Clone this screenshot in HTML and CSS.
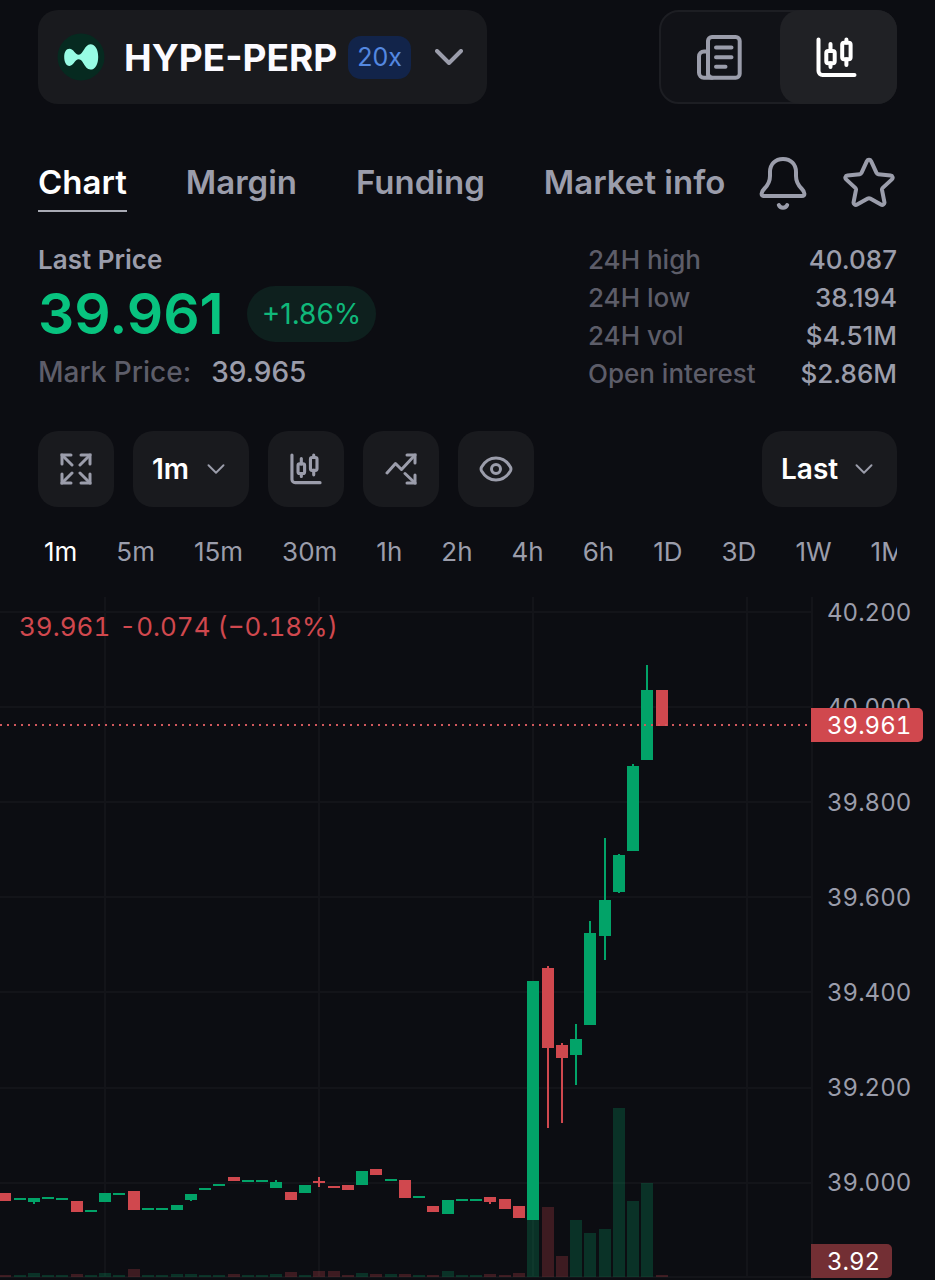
FILE: index.html
```html
<!DOCTYPE html>
<html lang="en">
<head>
  <meta charset="UTF-8">
  <meta name="viewport" content="width=device-width, initial-scale=1.0">
  <title>HYPE-PERP</title>
  <link rel="stylesheet" href="styles.css">
</head>
<body>

  <svg class="sprite" aria-hidden="true">
    <symbol id="candles" viewBox="0 0 41 41">
      <path d="M2.5 2.5V34a4 4 0 0 0 4 4h32"/>
      <rect x="10.3" y="14" width="8.4" height="12.3" rx="2"/>
      <path d="M14.5 7v7M14.5 26.3V30"/>
      <rect x="26.2" y="5.8" width="8.4" height="16.5" rx="2"/>
      <path d="M30.4 2.5v3M30.4 22.3V28"/>
    </symbol>
    <symbol id="chevron" viewBox="0 0 28 16">
      <path d="M2 2l12 12L26 2"/>
    </symbol>
  </svg>

  <header class="header">
    <button class="pair">
      <svg class="logo" viewBox="0 0 48 48" aria-hidden="true">
        <circle cx="24" cy="24" r="23.5"/>
        <path d="M7.2 24c0-5 2-8.200 5.300-8.200 4.200 0 5.300 5.900 9.300 5.900 4.600 0 5.700-10.400 11.600-10.400 5 0 7.800 5.600 7.800 12.600s-2.800 12.700-7.800 12.700c-5.900 0-7-10.300-11.600-10.300-4 0-5.100 6.600-9.300 6.600-3.300 0-5.300-3.900-5.300-8.900Z"/>
      </svg>
      <span class="pair-name">HYPE-PERP</span>
      <span class="leverage">20x</span>
      <svg class="icon pair-chevron"><use href="#chevron"/></svg>
    </button>

    <div class="view-switch">
      <button class="view" aria-label="Order book">
        <svg class="icon icon-news" viewBox="0 0 45 45">
          <rect x="11" y="2" width="31.7" height="40.7" rx="4"/>
          <path d="M11 16.5H7a5 5 0 0 0-5 5v16.2a5 5 0 0 0 5 5h8a4 4 0 0 1-4-4"/>
          <path d="M19 12.5h15.5M19 22.2h15.5M19 31.8h9.5"/>
        </svg>
      </button>
      <button class="view active" aria-label="Chart">
        <svg class="icon icon-candles"><use href="#candles"/></svg>
      </button>
    </div>
  </header>

  <nav class="tabs">
    <div class="tab-list">
      <button class="tab active">Chart</button>
      <button class="tab">Margin</button>
      <button class="tab">Funding</button>
      <button class="tab">Market info</button>
    </div>
    <div class="tab-actions">
      <button aria-label="Alerts">
        <svg class="icon icon-bell" viewBox="0 0 48 54">
          <path d="M24 3C16 3 11 8.500 11 16v4c0 5-2 9-5.500 12.500C2 36 1.500 40 5 40h38c3.500 0 3-4-.5-7.500C39 29 37 25 37 20v-4C37 8.500 32 3 24 3Z"/>
          <path d="M19.800 49c1.500 3.600 6.900 3.600 8.400 0"/>
        </svg>
      </button>
      <button aria-label="Favorite">
        <svg class="icon icon-star" viewBox="0 0 52 52">
          <path d="M23.900 4.200c.9-1.800 3.300-1.800 4.200 0l5.400 11.600c.3.800.9 1.300 1.700 1.400l12.400 1.400c2 .2 2.800 2.400 1.300 3.800l-9.200 8.500c-.6.600-.8 1.300-.7 2l2.400 12.200c.4 2-1.700 3.500-3.500 2.500L27.200 41.600c-.8-.4-1.600-.4-2.400 0L14.100 47.600c-1.800 1-3.900-.5-3.500-2.500L13 32.900c.1-.7-.1-1.400-.7-2L3.100 22.400c-1.500-1.400-.7-3.600 1.300-3.800l12.400-1.400c.8-.1 1.400-.6 1.700-1.400Z"/>
        </svg>
      </button>
    </div>
  </nav>

  <section class="summary">
    <div class="price-block">
      <div class="last-label">Last Price</div>
      <div class="price-row">
        <span class="price">39.961</span>
        <span class="change">+1.86%</span>
      </div>
      <div class="mark"><span>Mark Price:</span><b>39.965</b></div>
    </div>
    <dl class="stats">
      <dt>24H high</dt><dd>40.087</dd>
      <dt>24H low</dt><dd>38.194</dd>
      <dt>24H vol</dt><dd>$4.51M</dd>
      <dt>Open interest</dt><dd>$2.86M</dd>
    </dl>
  </section>

  <div class="toolbar">
    <button class="tool" aria-label="Fullscreen">
      <svg class="icon" viewBox="0 0 32 32">
        <path class="sharp" d="M2 11V2h9M21 2h9v9M30 21v9h-9M11 30H2v-9"/>
        <path d="M2 2l10 10M30 2L20 12M30 30L20 20M2 30l10-10"/>
      </svg>
    </button>
    <div class="picker">
      <select class="select-interval" aria-label="Interval">
        <option>1m</option>
        <option>5m</option>
        <option>1h</option>
      </select>
      <svg class="icon"><use href="#chevron"/></svg>
    </div>
    <button class="tool" aria-label="Chart type">
      <svg class="icon icon-type"><use href="#candles"/></svg>
    </button>
    <button class="tool" aria-label="Indicators">
      <svg class="icon" viewBox="0 0 32 32">
        <path class="sharp" d="M22 2h8v8M30 22v8h-8"/>
        <path d="M2 20L10.500 10.500l6 6L30 2M20 20.500L30 30"/>
      </svg>
    </button>
    <button class="tool" aria-label="Visibility">
      <svg class="icon icon-eye" viewBox="0 0 34 26">
        <path d="M2.600 11C5.500 6 10.500 2 17 2s11.500 4 14.400 9c.7 1.300.7 2.700 0 4-2.900 5-7.900 9-14.400 9S5.500 20 2.600 15c-.7-1.300-.7-2.700 0-4Z"/>
        <circle cx="17" cy="13" r="4.500"/>
      </svg>
    </button>
    <div class="picker picker-source">
      <select class="select-source" aria-label="Price source">
        <option>Last</option>
        <option>Mark</option>
      </select>
      <svg class="icon"><use href="#chevron"/></svg>
    </div>
  </div>

  <div class="intervals">
    <button class="active">1m</button>
    <button>5m</button>
    <button>15m</button>
    <button>30m</button>
    <button>1h</button>
    <button>2h</button>
    <button>4h</button>
    <button>6h</button>
    <button>1D</button>
    <button>3D</button>
    <button>1W</button>
    <button>1M</button>
  </div>

  <main class="chart">
    <div class="plot">
      <svg id="plot" viewBox="0 0 811 683" preserveAspectRatio="xMaxYMin slice"></svg>
      <div class="legend"><span>39.961</span><span>-0.074 (−0.18%)</span></div>
    </div>
    <div class="axis">
      <span>40.200</span>
      <span>40.000</span>
      <span>39.800</span>
      <span>39.600</span>
      <span>39.400</span>
      <span>39.200</span>
      <span>39.000</span>
      <div class="tag tag-price">39.961</div>
      <div class="tag tag-volume">3.92</div>
    </div>
  </main>

  <script src="chart.js"></script>
</body>
</html>
```
FILE: styles.css
```css
* {
  margin: 0;
  padding: 0;
  box-sizing: border-box;
}

body {
  background: #0c0d12;
  color: #9b9dab;
  font-family: Inter, sans-serif;
  font-size: 26px;
  overflow-x: hidden;
}

button,
select {
  font: inherit;
  color: inherit;
  background: none;
  border: none;
  cursor: pointer;
}

.sprite {
  display: none;
}

.icon {
  display: block;
  width: 32px;
  height: 32px;
  fill: none;
  stroke: currentColor;
  stroke-width: 3;
  stroke-linecap: round;
  stroke-linejoin: round;
}

.icon .sharp {
  stroke-linejoin: miter;
}

/* header */
.header {
  display: flex;
  justify-content: space-between;
  padding: 10px 38px 0;
}

.pair {
  display: flex;
  align-items: center;
  height: 94px;
  padding: 0 24px 0 19px;
  background: #191a1e;
  border-radius: 20px;
}

.logo {
  width: 48px;
  height: 48px;
}

.logo circle {
  fill: #062a20;
}

.logo path {
  fill: #97fce4;
}

.pair-name {
  margin-left: 19px;
  color: #fbfaff;
  font-size: 37px;
  font-weight: 700;
}

.leverage {
  margin-left: 11px;
  padding: 0 9px;
  line-height: 43px;
  color: #5488e0;
  background: #12244a;
  border-radius: 13px;
  font-size: 25px;
}

.pair-chevron {
  width: 28px;
  height: 16px;
  margin-left: 24px;
  stroke-width: 4;
}

.view-switch {
  display: flex;
  width: 238px;
  height: 94px;
  background: #111217;
  border: 2px solid #1d1e23;
  border-radius: 20px;
}

.view {
  display: grid;
  place-items: center;
  flex: 1;
  margin: -2px;
  padding-right: 5px;
  border-radius: 20px;
}

.view.active {
  flex: 0 0 117px;
  color: #fff;
  background: #202125;
}

.icon-news {
  width: 45px;
  height: 45px;
  stroke-width: 4;
}

.icon-candles {
  width: 41px;
  height: 41px;
  stroke-width: 4;
}

/* tabs */
.tabs {
  display: flex;
  justify-content: space-between;
  padding: 49px 40px 0 38px;
}

.tab-list {
  display: flex;
  gap: 59px;
}

.tab {
  height: 59px;
  border-bottom: 2px solid transparent;
  font-size: 33px;
  font-weight: 600;
  white-space: nowrap;
}

.tab.active {
  color: #fff;
  border-bottom-color: #a9aab4;
}

.tab-actions {
  display: flex;
  align-items: center;
  gap: 36px;
}

.icon-bell {
  width: 48px;
  height: 54px;
  stroke-width: 4;
}

.icon-star {
  width: 52px;
  height: 52px;
  stroke-width: 4;
}

/* price summary */
.summary {
  display: flex;
  justify-content: space-between;
  padding: 29px 38px 0;
  font-weight: 500;
  line-height: 38px;
}

.last-label {
  font-weight: 600;
}

.price-row {
  display: flex;
  align-items: center;
  gap: 23px;
  margin: 7px 0 11px;
}

.price {
  color: #08c37f;
  font-size: 57px;
  font-weight: 600;
}

.change {
  padding: 0 15px;
  line-height: 56px;
  color: #10b87a;
  background: #0e201e;
  border-radius: 28px;
  font-size: 28px;
  font-weight: 400;
}

.mark {
  display: flex;
  gap: 20px;
  color: #5d5d69;
  font-size: 28px;
}

.mark b {
  color: #9b9dab;
  font-weight: 500;
}

.stats {
  display: grid;
  grid-template-columns: auto auto;
  width: 309px;
}

.stats dt {
  color: #5d5d69;
}

.stats dd {
  text-align: right;
}

/* toolbar */
.toolbar {
  display: flex;
  gap: 19px;
  padding: 38px 38px 0;
}

.tool,
.picker {
  height: 76px;
  background: #191a1e;
  border-radius: 20px;
}

.tool {
  display: grid;
  place-items: center;
  width: 76px;
}

.tool .icon-type {
  stroke-width: 4;
}

.tool .icon-eye {
  width: 34px;
  height: 26px;
}

.picker {
  position: relative;
}

.picker-source {
  margin-left: auto;
}

.picker select {
  height: 76px;
  padding: 0 19px;
  appearance: none;
  color: #fff;
  font-size: 28px;
  font-weight: 600;
}

.select-interval {
  width: 116px;
}

.select-source {
  width: 135px;
}

.picker .icon {
  position: absolute;
  top: 33px;
  right: 24px;
  width: 18px;
  height: 10px;
  pointer-events: none;
}

.intervals {
  display: flex;
  gap: 39px;
  margin: 26px 38px;
  padding-left: 6px;
  line-height: 38px;
  overflow: hidden;
}

.intervals .active {
  color: #fff;
}

/* chart */
.chart {
  display: flex;
  height: 683px;
  overflow: hidden;
}

.plot {
  position: relative;
  flex: 1;
  min-width: 0;
}

.plot svg {
  display: block;
  width: 100%;
  height: 100%;
}

.grid {
  stroke: #131419;
  stroke-width: 2;
}

.up {
  fill: #02a368;
}

.down {
  fill: #d0484e;
}

.volume {
  opacity: 0.25;
}

.price-line {
  stroke: #d0585d;
  stroke-width: 2;
  stroke-dasharray: 2 5;
}

.legend {
  position: absolute;
  top: 11px;
  left: 19px;
  display: flex;
  gap: 9px;
  line-height: 38px;
  color: #d0484e;
  font-variant-numeric: tabular-nums;
}

.axis {
  position: relative;
  display: flex;
  flex-direction: column;
  gap: 65px;
  width: 124px;
  padding: 1px 0 0 14px;
  border-left: 2px solid #131419;
  font-size: 24px;
  line-height: 30px;
  font-variant-numeric: tabular-nums;
}

.tag {
  position: absolute;
  left: -2px;
  padding: 1px 12px 0 16px;
  line-height: 33px;
  color: #fff;
  border-radius: 0 5px 5px 0;
}

.tag-price {
  top: 111px;
  background: #d0484e;
}

.tag-volume {
  bottom: 2px;
  background: #732f34;
}
```
FILE: chart.js
```js
const svg = document.getElementById('plot');
const step = 14.27;
const firstX = 5.3;
const bottom = 680;

// [direction, body top, body bottom, wick top, wick bottom, volume height]
const candles = [
  ['down', 596, 604, 596, 604, 2],
  ['up', 601, 603, 601, 603, 2],
  ['up', 601, 605, 601, 607, 4],
  ['up', 600, 602, 600, 602, 2],
  ['up', 601, 603, 601, 603, 2],
  ['down', 604, 615, 604, 615, 3],
  ['up', 613, 615, 613, 615, 2],
  ['up', 596, 605, 596, 605, 4],
  ['up', 596, 598, 596, 598, 2],
  ['down', 594, 613, 594, 613, 8],
  ['up', 611, 613, 611, 613, 2],
  ['up', 611, 613, 611, 613, 2],
  ['up', 608, 613, 608, 613, 3],
  ['up', 597, 603, 597, 604, 3],
  ['up', 591, 593, 591, 593, 2],
  ['up', 587, 589, 587, 589, 2],
  ['down', 580, 584, 580, 584, 3],
  ['up', 583, 585, 583, 585, 2],
  ['up', 583, 585, 583, 585, 2],
  ['up', 585, 591, 583, 591, 3],
  ['down', 595, 603, 595, 603, 5],
  ['up', 588, 596, 588, 596, 2],
  ['down', 584, 586, 580, 590, 6],
  ['down', 589, 591, 589, 591, 6],
  ['down', 588, 593, 588, 593, 2],
  ['up', 574, 588, 574, 588, 4],
  ['down', 572, 578, 572, 578, 3],
  ['up', 582, 584, 582, 584, 3],
  ['down', 583, 601, 583, 601, 3],
  ['up', 599, 601, 599, 601, 2],
  ['down', 609, 615, 609, 615, 2],
  ['up', 603, 617, 603, 617, 6],
  ['up', 602, 604, 602, 604, 2],
  ['up', 602, 604, 602, 604, 2],
  ['down', 600, 605, 600, 607, 3],
  ['down', 602, 612, 602, 612, 2],
  ['down', 609, 621, 609, 621, 4],
  ['up', 384, 623, 384, 623, 57],
  ['down', 371, 451, 369, 531, 70],
  ['down', 448, 461, 446, 526, 21],
  ['up', 442, 458, 427, 488, 57],
  ['up', 336, 428, 324, 428, 44],
  ['up', 303, 339, 241, 363, 48],
  ['up', 258, 295, 257, 296, 169],
  ['up', 169, 254, 167, 254, 76],
  ['up', 93, 163, 68, 163, 94],
  ['down', 93, 129, 93, 129, 2]
];

let out = '';

[105, 319, 533, 747].forEach(x => {
  out += `<path class="grid" d="M${x} 0V${bottom}"/>`;
});
[15, 110, 205, 300, 395, 491, 586, bottom].forEach(y => {
  out += `<path class="grid" d="M0 ${y}H811"/>`;
});

candles.forEach(([dir, top, end, high, low, volume], i) => {
  const x = Math.round(firstX + i * step);
  out += `<rect class="${dir} volume" x="${x - 6}" y="${bottom - volume}" width="12" height="${volume}"/>`;
  out += `<rect class="${dir}" x="${x - 1}" y="${high}" width="2" height="${low - high}"/>`;
  out += `<rect class="${dir}" x="${x - 6}" y="${top}" width="12" height="${end - top}"/>`;
});

out += '<path class="price-line" d="M0 128H811"/>';
svg.innerHTML = out;
```
